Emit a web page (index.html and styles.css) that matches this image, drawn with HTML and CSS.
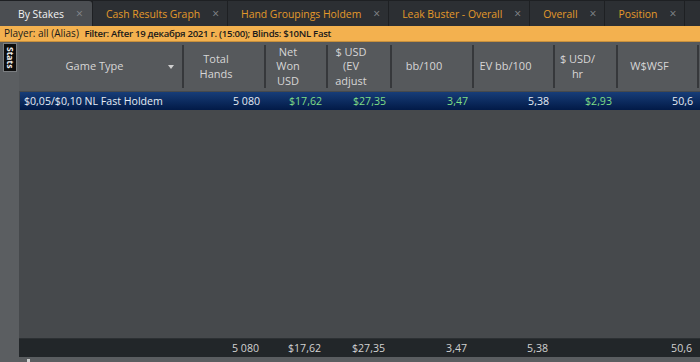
FILE: index.html
```html
<!DOCTYPE html>
<html lang="ru">
<head>
  <meta charset="UTF-8" />
  <title>By Stakes</title>
  <link rel="stylesheet" href="styles.css">
</head>
<body>
  <div class="tabs">
    <div class="tab active"><span>By Stakes</span><span class="close">×</span></div>
    <div class="tab"><span>Cash Results Graph</span><span class="close">×</span></div>
    <div class="tab"><span>Hand Groupings Holdem</span><span class="close">×</span></div>
    <div class="tab"><span>Leak Buster - Overall</span><span class="close">×</span></div>
    <div class="tab"><span>Overall</span><span class="close">×</span></div>
    <div class="tab"><span>Position</span><span class="close">×</span></div>
    <div class="tab rest"></div>
  </div>

  <div class="filter">
    Player: all (Alias) <b>Filter: After 19 декабря 2021 г. (15:00); Blinds: $10NL Fast</b>
  </div>

  <div class="main">
    <div class="side">
      <div class="stats-tab">Stats</div>
    </div>

    <div class="grid">
      <div class="head cols">
        <div class="hcell game">Game Type<span class="arrow"></span></div>
        <div class="hcell">Total<br>Hands</div>
        <div class="hcell">Net<br>Won<br>USD</div>
        <div class="hcell">$ USD<br>(EV<br>adjust</div>
        <div class="hcell">bb/100</div>
        <div class="hcell">EV bb/100</div>
        <div class="hcell">$ USD/<br>hr</div>
        <div class="hcell">W$WSF</div>
      </div>

      <div class="row cols selected">
        <div class="cell name">$0,05/$0,10 NL Fast Holdem</div>
        <div class="cell">5 080</div>
        <div class="cell money">$17,62</div>
        <div class="cell money">$27,35</div>
        <div class="cell money">3,47</div>
        <div class="cell">5,38</div>
        <div class="cell money">$2,93</div>
        <div class="cell">50,6</div>
      </div>

      <div class="body"></div>

      <div class="row cols total">
        <div class="cell name"></div>
        <div class="cell">5 080</div>
        <div class="cell">$17,62</div>
        <div class="cell">$27,35</div>
        <div class="cell">3,47</div>
        <div class="cell">5,38</div>
        <div class="cell"></div>
        <div class="cell">50,6</div>
      </div>

      <div class="scroll"><span class="thumb"></span></div>
    </div>
  </div>
</body>
</html>
```

FILE: styles.css
```css
body {
  margin: 0;
  width: 700px;
  height: 362px;
  overflow: hidden;
  font-family: "Open Sans", "Noto Sans", sans-serif;
  font-size: 10.6px;
  background-color: #46494c;
}
.tabs {
  display: flex;
  height: 26px;
  background-color: #1e2023;
  gap: 1px;
  overflow: hidden;
}
.tab {
  display: flex;
  align-items: center;
  gap: 12px;
  padding: 0 8px 0 13px;
  margin-top: 1px;
  background-color: #2c2f33;
  color: #e49a2a;
  font-size: 10.4px;
  white-space: nowrap;
}
.tab.rest {
  flex: 1;
}
.tab.active {
  background-color: #4b4e52;
  color: #f2f2f2;
  padding: 0 9px 0 18px;
  border-radius: 0 3px 0 0;
}
.close {
  color: #85888c;
  font-size: 12px;
}
.filter {
  height: 15px;
  line-height: 15px;
  padding-left: 4px;
  background-color: #f3b14f;
  color: #1a1a1a;
  font-size: 10px;
  white-space: nowrap;
  border-bottom: 1px solid #c8903c;
}
.filter b {
  margin-left: 3px;
  font-size: 9.6px;
  font-weight: 600;
  letter-spacing: -0.3px;
}
.main {
  display: flex;
  height: 320px;
}
.side {
  width: 19px;
  background-color: #5b5e61;
  padding-top: 1px;
}
.stats-tab {
  width: 12px;
  height: 27px;
  margin-left: 3px;
  background-color: #0c0c0c;
  border: 1px solid #7a7d80;
  color: #f0f0f0;
  font-size: 8.5px;
  font-weight: bold;
  writing-mode: vertical-rl;
  text-align: center;
  line-height: 12px;
}
.grid {
  flex: 1;
  display: flex;
  flex-direction: column;
}
.cols {
  display: grid;
  grid-template-columns: 165px 82px 62px 64px 82px 81px 63px 81px;
}
.head {
  height: 43px;
  padding: 3px 0;
  background-color: #56595c;
  color: #d6d6d6;
  font-size: 11px;
  line-height: 14.5px;
}
.hcell {
  display: flex;
  align-items: center;
  justify-content: center;
  text-align: center;
  padding-right: 16px;
  border-right: 2px solid #36383b;
  overflow: hidden;
  white-space: nowrap;
}
.hcell.game {
  position: relative;
  padding-right: 12px;
}
.arrow {
  position: absolute;
  right: 8px;
  top: 20px;
  border-left: 3px solid transparent;
  border-right: 3px solid transparent;
  border-top: 4px solid #cfcfcf;
}
.row {
  height: 18px;
  line-height: 18px;
  white-space: nowrap;
}
.cell {
  text-align: right;
  padding-right: 7px;
}
.cell.name {
  text-align: left;
  padding-left: 4px;
}
.selected {
  margin: 1px 0 0 1px;
  background: linear-gradient(#173d78, #021a47);
  color: #e6ecf4;
}
.money {
  color: #7fde86;
}
.body {
  flex: 1;
  background-color: #46494c;
}
.total {
  background-color: #222629;
  border-top: 1px solid #2c3033;
  color: #d2d2d2;
}
.scroll {
  height: 5px;
  background-color: #5a5d60;
  position: relative;
}
.thumb {
  position: absolute;
  left: 8px;
  top: 2px;
  width: 3px;
  height: 3px;
  background-color: #d0d0d0;
}
```
